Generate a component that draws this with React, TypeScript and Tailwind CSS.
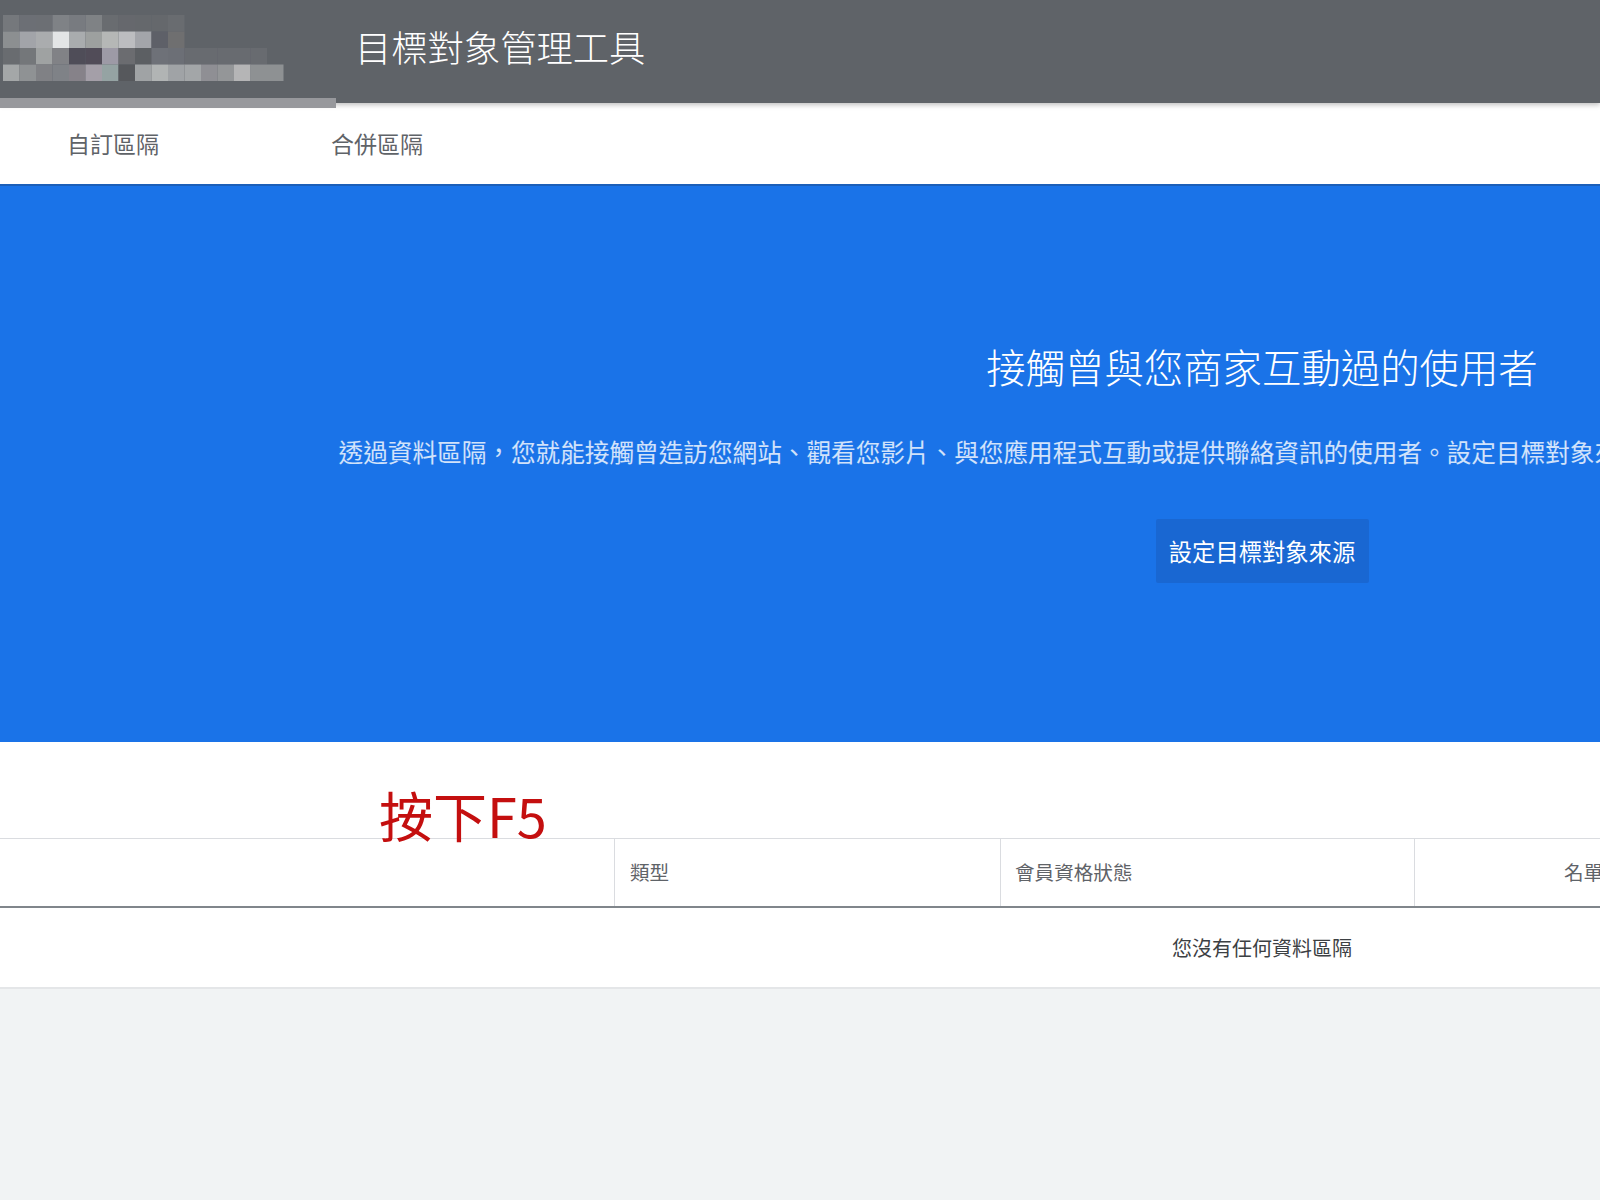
const logoRows = [
  ["#75787c", "#6c6f75", "#6c6f74", "#7f8286", "#787b80", "#7f8285", "#696c70", "#66686d", "#65686c", "#65686c", "#696c70"],
  ["#8c8f91", "#a2a4a9", "#aaacae", "#e3e5e6", "#a9acae", "#9da09f", "#b5b7b6", "#bcbdc0", "#a3a5aa", "#5e6068", "#6f6f70"],
  ["#696c70", "#74777a", "#9fa2a2", "#818286", "#4f4d58", "#514c58", "#9d9aa6", "#6b6c70", "#5c5f63", "#6e7178", "#6c6f76", "#686b70", "#686b70", "#686b70", "#686b70", "#686b70"],
  ["#a4a7a8", "#8f9294", "#808185", "#7f8287", "#868289", "#a49fa8", "#95a3a3", "#56585c", "#a0a3a5", "#b1b4b4", "#a0a3a6", "#a3a6a8", "#8f8f94", "#949698", "#b5b5b6", "#8e9193", "#8e9193"],
];

// Pixelated (censored) logo
function BlurredLogo() {
  return (
    <svg width="337" height="108" viewBox="0 0 337 108" className="shrink-0 self-start overflow-visible blur-[0.6px]">
      {logoRows.map((row, y) =>
        row.map((color, x) => (
          <rect key={`${y}-${x}`} x={3 + x * 16.5} y={15 + y * 16.5} width="16.5" height="16.5" fill={color} />
        ))
      )}
      <rect x="0" y="98" width="336" height="10" fill="#97989c" />
    </svg>
  );
}

export default function App() {
  return (
    <div className="relative h-[1200px] w-full overflow-hidden bg-[#f1f3f4] font-['Noto_Sans_CJK_TC','Noto_Sans',sans-serif]">
      <div className="w-[2524px]">
        {/* Top bar */}
        <header className="relative z-10 flex h-[103px] w-[1600px] items-center bg-[#5f6368] shadow-[0_2px_5px_rgba(0,0,0,0.25)]">
          <BlurredLogo />
          <h1 className="mb-[12px] ml-[18px] text-[36.3px] font-light leading-[48px] text-white">目標對象管理工具</h1>
        </header>

        {/* Tabs */}
        <nav className="flex h-[83px] items-center gap-[172px] border-b-2 border-[#1c5fb8] bg-white pl-[67px] text-[23px] text-[#5f6368]">
          <span>自訂區隔</span>
          <span>合併區隔</span>
        </nav>

        {/* Hero */}
        <section className="flex h-[556px] flex-col items-center bg-[#1a73e8] pt-[156px] text-white">
          <h2 className="text-[39.4px] font-light leading-[48px]">接觸曾與您商家互動過的使用者</h2>
          <p className="mt-[45px] whitespace-nowrap text-[24.64px] leading-[32px] text-white/80">
            透過資料區隔，您就能接觸曾造訪您網站、觀看您影片、與您應用程式互動或提供聯絡資訊的使用者。設定目標對象來源，即可開始建立資料區隔與目標對象名單並使用。
          </p>
          <button className="mt-[52px] flex h-[64px] w-[213px] items-center justify-center rounded-[2px] bg-[#1967d2] text-[23.3px] text-white">
            設定目標對象來源
          </button>
        </section>

        {/* Table */}
        <section className="relative bg-white pt-[96px]">
          <span className="absolute left-[379px] top-[37px] z-10 text-[54px] leading-[72px] text-[#c40f0f]">按下F5</span>
          <div className="grid h-[70px] grid-cols-[615px_386px_414px_1fr] border-y border-b-2 border-t-[#dadce0] border-b-[#80868b] text-[19.6px] text-[#5f6368]">
            <div className="border-r border-[#dadce0]" />
            <div className="flex items-center border-r border-[#dadce0] pb-[2px] pl-[15px]">類型</div>
            <div className="flex items-center border-r border-[#dadce0] pb-[2px] pl-[14px]">會員資格狀態</div>
            <div className="flex items-center pb-[2px] pl-[149px]">名單成員</div>
          </div>
          <div className="flex h-[81px] items-center justify-center border-b-2 border-[#e4e6e8] text-[20px] text-[#3c4043]">
            您沒有任何資料區隔
          </div>
        </section>
      </div>
    </div>
  );
}
